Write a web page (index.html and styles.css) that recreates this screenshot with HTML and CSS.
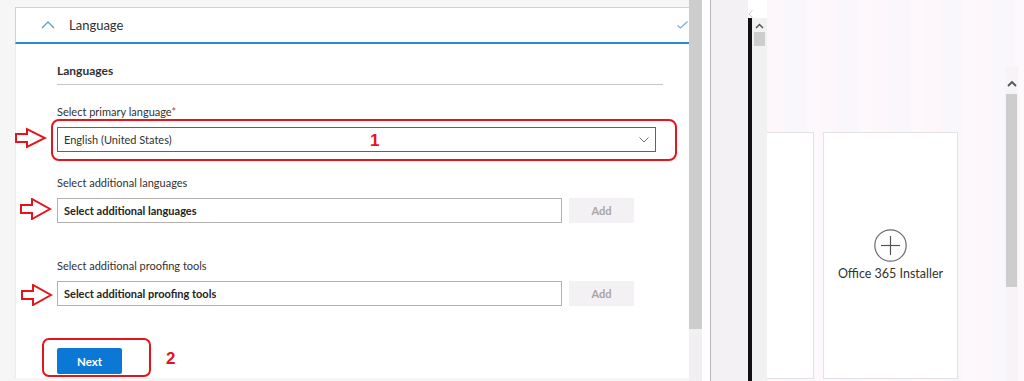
FILE: index.html
```html
<!DOCTYPE html>
<html lang="en">
<head>
<meta charset="utf-8">
<title>Language</title>
<link rel="stylesheet" href="styles.css">
</head>
<body>
<div class="page">
  <section class="main">
    <div class="panel">
      <div class="acc-head">
        <svg class="chev-up" width="14" height="8" viewBox="0 0 14 8"><polyline points="1,7 7,1 13,7" fill="none" stroke="#5b9fd9" stroke-width="1.3"/></svg>
        <span class="acc-title">Language</span>
        <svg class="check" width="11" height="8" viewBox="0 0 11 8"><polyline points="0.5,4.5 3.5,7 10.5,0.5" fill="none" stroke="#79aee0" stroke-width="1.3"/></svg>
      </div>
      <div class="acc-body">
        <h2 class="sec-title">Languages</h2>

        <div class="field f1">
          <label>Select primary language<span class="req">*</span></label>
          <div class="row">
            <div class="dropdown">
              <span>English (United States)</span>
              <svg width="10" height="6" viewBox="0 0 10 6"><polyline points="0.5,0.5 5,5 9.5,0.5" fill="none" stroke="#707070" stroke-width="1"/></svg>
            </div>
            <svg class="arrow a1" width="32" height="22" viewBox="0 0 32 22"><polygon points="1,7 12,7 12,2 30,11 12,20 12,15 1,15" fill="none" stroke="#e5141c" stroke-width="2" stroke-linejoin="miter"/></svg>
            <div class="redbox rb1"></div>
            <span class="num n1">1</span>
          </div>
        </div>

        <div class="field f2">
          <label>Select additional languages</label>
          <div class="row">
            <div class="input">Select additional languages</div>
            <button class="add">Add</button>
            <svg class="arrow a2" width="32" height="22" viewBox="0 0 32 22"><polygon points="1,7 12,7 12,1 30,11 12,21 12,15 1,15" fill="none" stroke="#e5141c" stroke-width="2"/></svg>
          </div>
        </div>

        <div class="field f3">
          <label>Select additional proofing tools</label>
          <div class="row">
            <div class="input">Select additional proofing tools</div>
            <button class="add">Add</button>
            <svg class="arrow a3" width="32" height="22" viewBox="0 0 32 22"><polygon points="1,7 12,7 12,1 30,11 12,21 12,15 1,15" fill="none" stroke="#e5141c" stroke-width="2"/></svg>
          </div>
        </div>

        <div class="actions">
          <button class="next">Next</button>
          <div class="redbox rb2"></div>
          <span class="num n2">2</span>
        </div>
      </div>
    </div>
    <div class="vscroll"><div class="vthumb"></div></div>
  </section>

  <div class="white-gap"></div>
  <div class="divider"></div>
  <div class="strip"></div>

  <div class="mini">
    <div class="mini-top"><svg width="5" height="8" viewBox="0 0 5 8"><polyline points="4.5,0.5 0.8,4 4.5,7.5" fill="none" stroke="#c8c8c8" stroke-width="1"/></svg></div>
    <div class="mini-body">
      <div class="black-bar"></div>
      <div class="mini-scroll">
        <svg class="up" width="9" height="6" viewBox="0 0 9 6"><polyline points="1,5 4.5,1.5 8,5" fill="none" stroke="#555" stroke-width="1.5"/></svg>
        <div class="mini-thumb"></div>
      </div>
    </div>
  </div>

  <section class="canvas">
    <div class="cards">
      <div class="card card-partial"></div>
      <div class="card card-add">
        <svg width="33" height="33" viewBox="0 0 33 33"><circle cx="16.5" cy="16.5" r="15.7" fill="none" stroke="#6b6b6b" stroke-width="1.2"/><line x1="16.5" y1="7" x2="16.5" y2="26" stroke="#555" stroke-width="1.2"/><line x1="7" y1="16.5" x2="26" y2="16.5" stroke="#555" stroke-width="1.2"/></svg>
        <span class="card-label">Office 365 Installer</span>
      </div>
    </div>
    <div class="rscroll">
      <div class="r-arrow"><svg width="10" height="7" viewBox="0 0 10 7"><polyline points="1,6 5,2 9,6" fill="none" stroke="#555" stroke-width="1.8"/></svg></div>
      <div class="r-thumb"></div>
    </div>
  </section>
</div>
</body>
</html>
```

FILE: styles.css
```css
html, body {
  margin: 0;
  padding: 0;
}
body {
  width: 1024px;
  height: 381px;
  overflow: hidden;
  font-family: Lato, "Noto Sans", sans-serif;
  background: #f6f6f6;
  color: #323130;
}
.page {
  display: flex;
  height: 381px;
}

/* main form panel */
.main {
  display: flex;
  flex: none;
  width: 702px;
}
.panel {
  width: 689px;
  box-sizing: border-box;
  padding: 7px 0 0 15px;
  background: #f6f6f6;
  display: flex;
  flex-direction: column;
}
.acc-head {
  height: 34px;
  background: #fff;
  border-top: 1px solid #d2d2d2;
  border-left: 1px solid #d2d2d2;
  border-bottom: 2px solid #2d8ad8;
  display: flex;
  align-items: center;
  padding-left: 25px;
}
.acc-title {
  font-size: 13px;
  margin-left: 14px;
  color: #323130;
}
.check {
  margin-left: auto;
  margin-right: 1px;
  margin-top: -1px;
}
.acc-body {
  position: relative;
  height: 334px;
  box-sizing: border-box;
  background: #fff;
  border-left: 1px solid #ececec;
  padding: 19px 0 0 41px;
}
.sec-title {
  margin: 0;
  width: 606px;
  font-size: 12px;
  font-weight: 700;
  line-height: 16px;
  padding-bottom: 5px;
  border-bottom: 1px solid #c8c6c4;
  color: #323130;
}
.field {
  display: flex;
  flex-direction: column;
}
.field label {
  font-size: 11px;
  line-height: 15px;
  margin-bottom: 8px;
  color: #323130;
}
.req {
  color: #d13438;
}
.f1 { margin-top: 19px; }
.f2 { margin-top: 23px; }
.f3 { margin-top: 35px; }
.row {
  position: relative;
  display: flex;
  align-items: center;
}
.dropdown {
  width: 599px;
  height: 25px;
  box-sizing: border-box;
  border: 1px solid #0a78d4;
  padding: 0 6px 0 6px;
  display: flex;
  align-items: center;
  justify-content: space-between;
  font-size: 11px;
  color: #323130;
}
.input {
  width: 505px;
  height: 25px;
  box-sizing: border-box;
  border: 1px solid #b3b0ad;
  padding-left: 6px;
  display: flex;
  align-items: center;
  font-size: 11px;
  font-weight: 700;
  color: #252423;
}
.add {
  margin-left: 7px;
  width: 65px;
  height: 25px;
  border: none;
  background: #f4f1f4;
  color: #a7a5a3;
  font-family: inherit;
  font-size: 11px;
  font-weight: 700;
  padding: 0;
}
.actions {
  position: relative;
  margin-top: 42px;
  display: flex;
}
.next {
  width: 65px;
  height: 26px;
  border: none;
  border-radius: 2px;
  background: #0a78d4;
  color: #fff;
  font-family: inherit;
  font-size: 11.5px;
  font-weight: 700;
  padding: 0;
}

/* annotations drawn over the form */
.arrow {
  position: absolute;
  top: 0;
}
.a1 { left: -42px; top: 0; }
.a2 { left: -37px; top: 0; }
.a3 { left: -36px; top: 3px; }
.redbox {
  position: absolute;
  border: 2px solid #e5141c;
  border-radius: 8px;
  box-sizing: border-box;
}
.rb1 {
  left: -6px;
  top: -8px;
  width: 626px;
  height: 42px;
}
.rb2 {
  left: -15px;
  top: -10px;
  width: 109px;
  height: 39px;
  border-radius: 7px;
}
.num {
  position: absolute;
  font-family: "Liberation Sans", Arial, sans-serif;
  font-weight: 700;
  font-size: 17px;
  line-height: 17px;
  color: #e5141c;
}
.n1 { left: 313px; top: 5px; }
.n2 { left: 109px; top: 2px; }

/* left panel scrollbar */
.vscroll {
  width: 13px;
  background: #f1eff2;
}
.vthumb {
  height: 329px;
  background: #cdcdcd;
}

.white-gap {
  width: 8px;
  background: #fff;
}
.divider {
  width: 1px;
  background: #b7b7b7;
}
.strip {
  width: 37px;
  background: #f3f1f3;
}

/* narrow middle pane */
.mini {
  width: 19px;
  display: flex;
  flex-direction: column;
}
.mini-top {
  height: 18px;
  background: #fff;
  padding: 2px 0 0 0;
  box-sizing: border-box;
}
.mini-body {
  flex: 1;
  display: flex;
}
.black-bar {
  width: 4px;
  background: #111;
}
.mini-scroll {
  width: 15px;
  background: #f1f1f1;
  display: flex;
  flex-direction: column;
  align-items: center;
}
.mini-scroll .up {
  margin-top: 5px;
}
.mini-thumb {
  margin-top: 3px;
  width: 11px;
  height: 14px;
  background: #cdcdcd;
}

/* designer canvas */
.canvas {
  flex: 1;
  display: flex;
  background: repeating-linear-gradient(90deg, #fdf7fc 0 18px, #f9f7fb 18px 40px, #fcf8fc 40px 52px);
}
.cards {
  width: 238px;
  padding-top: 132px;
  display: flex;
  gap: 9px;
}
.card {
  height: 247px;
  box-sizing: border-box;
  background: #fff;
  border: 1px solid #e3e3e3;
}
.card-partial {
  width: 47px;
  border-left: none;
}
.card-add {
  width: 135px;
  display: flex;
  flex-direction: column;
  align-items: center;
  padding-top: 96px;
}
.card-label {
  margin-top: 4px;
  font-size: 12.5px;
  line-height: 16px;
  color: #333;
  white-space: nowrap;
}
.rscroll {
  width: 13px;
  margin-top: 66px;
  background: #f6f4f7;
  display: flex;
  flex-direction: column;
  align-items: center;
}
.r-arrow {
  height: 28px;
  display: flex;
  align-items: flex-start;
  padding-top: 14px;
  box-sizing: border-box;
}
.r-thumb {
  width: 11px;
  height: 193px;
  background: #cdcdcd;
}
```
